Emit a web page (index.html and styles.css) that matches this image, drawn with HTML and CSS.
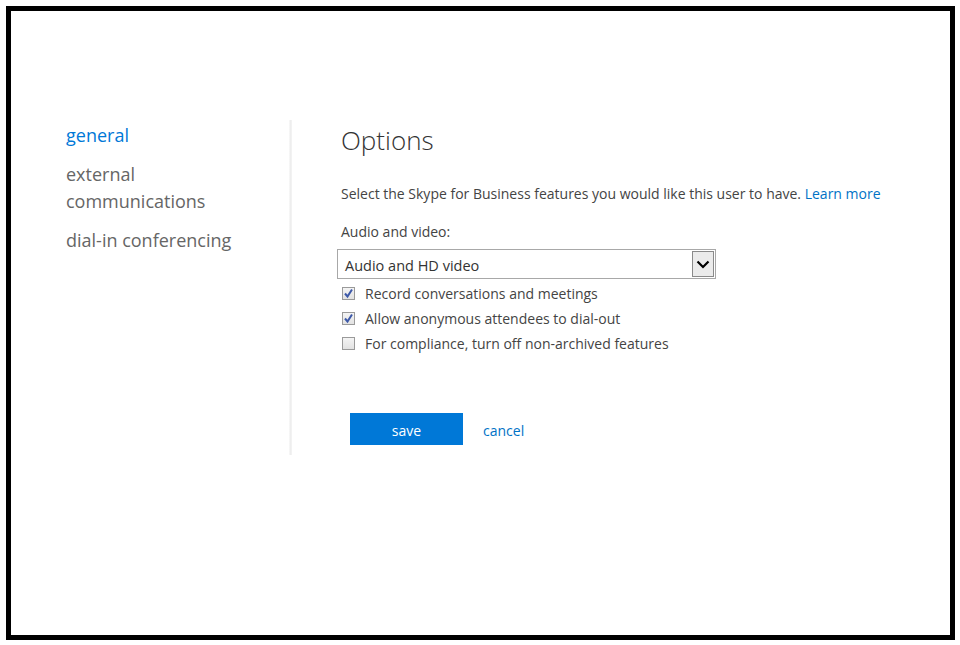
FILE: index.html
```html
<!DOCTYPE html>
<html>
<head>
<meta charset="utf-8">
<link rel="stylesheet" href="styles.css">
</head>
<body>
<div class="frame">
  <div class="layout">
    <nav class="nav">
      <a class="nav-item active">general</a>
      <a class="nav-item">external<br>communications</a>
      <a class="nav-item">dial-in conferencing</a>
    </nav>
    <div class="divider"></div>
    <main class="main">
      <h1 class="title">Options</h1>
      <p class="desc">Select the Skype for Business features you would like this user to have. <a class="link">Learn more</a></p>
      <div class="label">Audio and video:</div>
      <div class="select">
        <span class="select-value">Audio and HD video</span>
        <span class="select-btn">
          <svg width="14" height="9" viewBox="0 0 14 9"><path d="M1.5 1.5 L7 7 L12.5 1.5" fill="none" stroke="#000" stroke-width="2.2"/></svg>
        </span>
      </div>
      <ul class="checks">
        <li class="check"><span class="box checked"><svg width="11" height="11" viewBox="0 0 11 11"><path d="M2 5.5 L4.5 8.5 L9 1.5" fill="none" stroke="#3d59a8" stroke-width="2"/></svg></span>Record conversations and meetings</li>
        <li class="check"><span class="box checked"><svg width="11" height="11" viewBox="0 0 11 11"><path d="M2 5.5 L4.5 8.5 L9 1.5" fill="none" stroke="#3d59a8" stroke-width="2"/></svg></span>Allow anonymous attendees to dial-out</li>
        <li class="check"><span class="box"></span>For compliance, turn off non-archived features</li>
      </ul>
      <div class="actions">
        <button class="save">save</button>
        <a class="link cancel">cancel</a>
      </div>
    </main>
  </div>
</div>
</body>
</html>
```
FILE: styles.css
```css
html, body {
  margin: 0;
  padding: 0;
  background: #fff;
}
body {
  font-family: "Open Sans", "Noto Sans", sans-serif;
  color: #444;
}
.frame {
  margin: 6px 0 0 6px;
  width: 939px;
  height: 624px;
  border: 5px solid #000;
  box-sizing: content-box;
}
.layout {
  display: flex;
  padding-top: 109px;
}
.nav {
  width: 223px;
  padding-left: 55px;
  padding-top: 2px;
  display: flex;
  flex-direction: column;
}
.nav-item {
  font-size: 18px;
  line-height: 27px;
  color: #666;
  margin-bottom: 12px;
}
.nav-item.active {
  color: #0078d7;
}
.divider {
  width: 3px;
  height: 335px;
  background: linear-gradient(to right, #f9f9f9, #ececec 60%, #f6f6f6);
}
.main {
  padding-left: 49px;
  flex: 1;
}
.title {
  margin: 3px 0 0 0;
  font-size: 26px;
  font-weight: 300;
  line-height: 34px;
  color: #333;
}
.desc {
  margin: 27px 0 0 0;
  font-size: 14px;
  line-height: 20px;
}
.link {
  color: #0072c6;
}
.label {
  margin-top: 18px;
  font-size: 14px;
  line-height: 20px;
}
.select {
  margin: 7px 0 0 -4px;
  width: 377px;
  height: 28px;
  border: 1px solid #a8a8a8;
  display: flex;
  align-items: center;
  justify-content: space-between;
}
.select-value {
  padding-left: 7px;
  padding-top: 3px;
  font-size: 14.5px;
  color: #333;
}
.select-btn {
  width: 22px;
  height: 26px;
  margin-right: 1px;
  border: 1px solid #8a8a8a;
  background: #ebebeb;
  display: flex;
  align-items: center;
  justify-content: center;
  box-sizing: border-box;
}
.checks {
  list-style: none;
  margin: 2px 0 0 0;
  padding: 0;
}
.check {
  display: flex;
  align-items: center;
  height: 25px;
  font-size: 14px;
}
.box {
  width: 13px;
  height: 13px;
  margin: 0 10px 0 1px;
  border: 1px solid #9a9a9a;
  box-sizing: border-box;
  background: linear-gradient(#f4f4f4, #e2e2e2);
  display: flex;
  align-items: center;
  justify-content: center;
}
.actions {
  margin-top: 57px;
  margin-left: 9px;
  display: flex;
  align-items: center;
  gap: 20px;
}
.save {
  width: 113px;
  height: 32px;
  border: none;
  background: #0078d7;
  color: #fff;
  font-family: "Open Sans", sans-serif;
  font-size: 14px;
  padding: 3px 0 0 0;
  box-sizing: border-box;
}
.cancel {
  font-size: 14px;
  padding-top: 2px;
}
```
